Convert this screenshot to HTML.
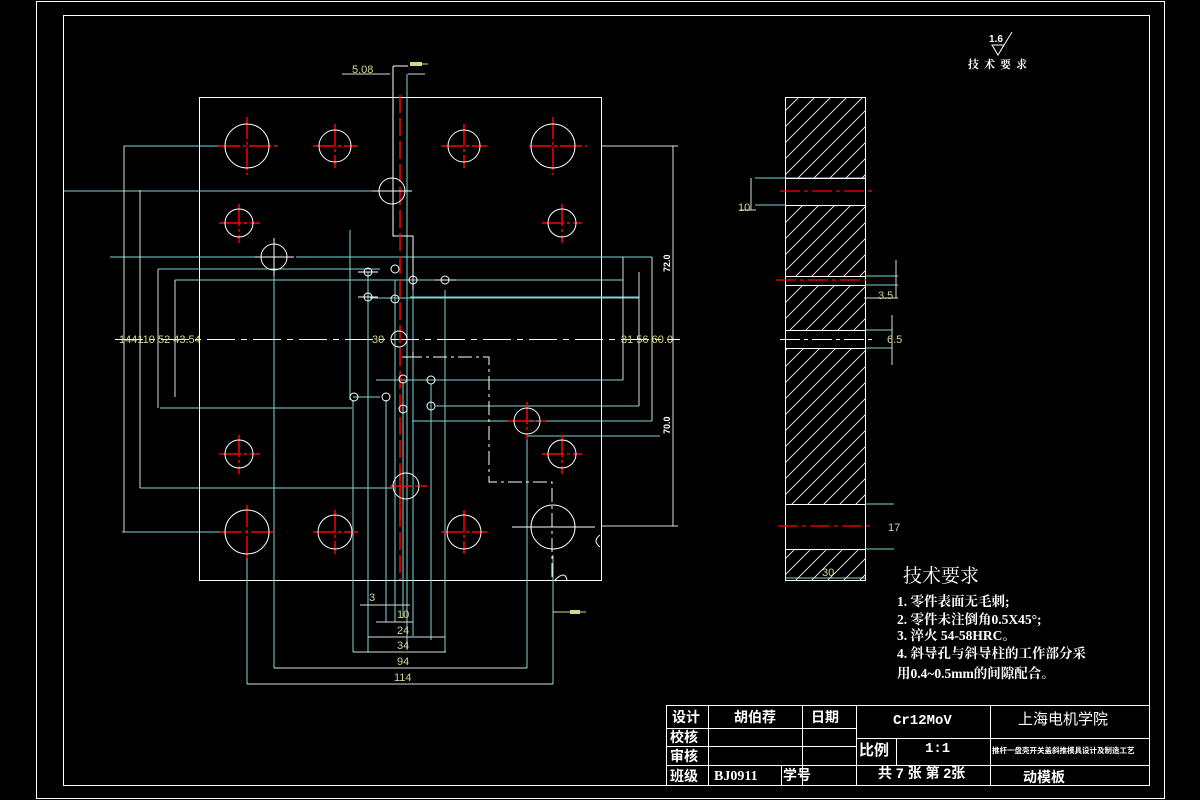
<!DOCTYPE html>
<html><head><meta charset="utf-8"><style>
html,body{margin:0;padding:0;background:#000;width:1200px;height:800px;overflow:hidden}
svg{display:block}
text{font-family:"Liberation Sans","Noto Sans CJK SC",sans-serif}
.y{fill:#d6d68a;font-size:11px}
.w{fill:#fff}
.cj{font-family:"Liberation Serif","Noto Serif CJK SC","Noto Sans CJK SC",serif;fill:#fff}
</style></head><body>
<svg width="1200" height="800" viewBox="0 0 1200 800" xmlns="http://www.w3.org/2000/svg">
<defs>
<pattern id="h" width="16" height="16" patternUnits="userSpaceOnUse">
<path d="M0,16 L16,0 M-4,4 L4,-4 M12,20 L20,12" stroke="#fff" stroke-width="0.8"/>
</pattern>
</defs>
<rect width="1200" height="800" fill="#000"/>
<rect x="36.5" y="1.5" width="1128" height="797" fill="none" stroke="#fff" stroke-width="1"/>
<rect x="63.5" y="15.5" width="1086" height="770" fill="none" stroke="#fff" stroke-width="1"/>

<rect x="199.5" y="97.5" width="402" height="483" fill="none" stroke="#fff"/>

<g stroke="#7fd6d6" stroke-width="1" fill="none">
<path d="M124,146H225 M140,488H392 M122,532H225 M64,191H380 M110,257H260 M296,257H652 M158,269H380 M175,280H623 M370,298H639 M410,297H639 M160,408H352 M353,397H380 M376,380H623 M436,380H623 M436,406H639 M412,421H652 M527,436H660"/>
<path d="M407,74V650 M274,270V668 M247,555V684 M368,272V652 M395,280V622 M413,290V636 M445,290V652 M353,400V652 M386,400V622 M403,382V618 M431,384V640 M527,436V668 M553,555V684 M350,230V400"/>
<path d="M755,178H866 M755,205H866 M866,276H898 M866,285H898 M866,330H892 M866,348H892 M866,504H894 M866,549H894 M786,578H866"/>
</g>

<g stroke="#ddd" stroke-width="1" fill="none">
<path d="M124,146V532 M140,190V488 M158,269V408 M175,280V397"/>
<path d="M602,146H678 M602,526H678 M673,146V526 M623,257V380 M639,272V406 M652,257V421"/>
<path d="M342,74H390 M408,74H425"/>
<path d="M360,605H410 M376,622H413 M368,637H445 M353,652H446 M274,668H527 M247,684H553"/>
<path d="M751,178V210 M740,210H756 M896,260V298 M864,298H898 M892,315V365"/>
</g>

<path d="M115,339.5H680" stroke="#fff" stroke-dasharray="28,6,6,6" fill="none"/>

<g stroke="#fff" fill="none">
<path d="M393,66V236H413V290"/>
<path d="M393,66H408"/>
<path d="M413,352V357H489V482H552V580" stroke-dasharray="14,4,3,4"/>
<path d="M402,357H413"/>
<path d="M555,580 q10,-10 12,0" />
<path d="M600,535 q-8,6 0,12"/>
</g>

<path d="M400,95V580" stroke="#f00" stroke-width="1.5" stroke-dasharray="18,5"/>
<g stroke="#f00" stroke-width="1.5" stroke-dasharray="22,3,3,3">
<path d="M218,146H277 M247,117V175 M529,146H587 M553,117V175"/>
<path d="M313,146H358 M335,124V168 M441,146H487 M464,124V168"/>
<path d="M219,223H260 M239,204V243 M542,223H582 M562,204V243"/>
<path d="M219,454H260 M239,435V474 M542,454H582 M562,435V474"/>
<path d="M220,532H275 M247,505V560 M313,532H358 M335,510V554 M441,532H487 M464,510V554"/>
<path d="M508,421H546 M527,402V440 M390,486H427 M400,470V520"/>
</g>

<g stroke="#fff" fill="none" stroke-width="1">
<circle cx="247" cy="146" r="22"/><circle cx="553" cy="146" r="22"/>
<circle cx="335" cy="146" r="16"/><circle cx="464" cy="146" r="16"/>
<circle cx="239" cy="223" r="14"/><circle cx="562" cy="223" r="14"/>
<circle cx="239" cy="454" r="14"/><circle cx="562" cy="454" r="14"/>
<circle cx="247" cy="532" r="22"/><circle cx="553" cy="527" r="22"/>
<circle cx="335" cy="532" r="17"/><circle cx="464" cy="532" r="17"/>
<circle cx="392" cy="191" r="13"/><circle cx="274" cy="257" r="13"/>
<circle cx="527" cy="421" r="13"/><circle cx="406" cy="486" r="13"/>
<circle cx="399" cy="339" r="8"/>
<circle cx="368" cy="272" r="4"/><circle cx="395" cy="269" r="4"/>
<circle cx="413" cy="280" r="4"/><circle cx="445" cy="280" r="4"/>
<circle cx="368" cy="297" r="4"/><circle cx="395" cy="299" r="4"/>
<circle cx="403" cy="379" r="4"/><circle cx="431" cy="380" r="4"/>
<circle cx="354" cy="397" r="4"/><circle cx="386" cy="397" r="4"/>
<circle cx="403" cy="409" r="4"/><circle cx="431" cy="406" r="4"/>
<path d="M255,257H294 M274,238V276 M372,191H412 M358,272H378 M358,297H378 M435,280H456 M512,527H595"/>
</g>

<text x="352" y="73" class="y">5.08</text>
<rect x="410" y="62" width="12" height="4" fill="#d6d68a"/><path d="M422,64H428" stroke="#d6d68a"/>
<text x="119" y="343" class="y">144110 52 43.54</text>
<text x="372" y="343" class="y">30</text>
<text x="621" y="343" class="y">31 56 60.0</text>
<text x="0" y="0" class="w" style="font-size:9px;font-weight:bold" transform="translate(670,272) rotate(-90)">72.0</text>
<text x="0" y="0" class="w" style="font-size:9px;font-weight:bold" transform="translate(670,434) rotate(-90)">70.0</text>
<text x="369" y="601" class="y">3</text>
<text x="397" y="618" class="y">10</text>
<text x="397" y="634" class="y">24</text>
<text x="397" y="649" class="y">34</text>
<text x="397" y="665" class="y">94</text>
<text x="394" y="681" class="y">114</text>
<rect x="570" y="610" width="10" height="4" fill="#d6d68a"/><path d="M553,612H586" stroke="#d6d68a"/>

<rect x="785" y="97" width="81" height="483" fill="url(#h)"/>
<g fill="#000">
<rect x="786" y="178" width="80" height="27"/>
<rect x="786" y="276" width="80" height="9"/>
<rect x="786" y="330" width="80" height="18"/>
<rect x="786" y="504" width="80" height="45"/>
</g>
<rect x="785.5" y="97.5" width="80" height="483" fill="none" stroke="#fff"/>
<g stroke="#fff"><path d="M786,178.5H866 M786,205.5H866 M786,276.5H866 M786,285.5H866 M786,330.5H866 M786,348.5H866 M786,504.5H866 M786,549.5H866"/></g>
<g stroke="#f00" stroke-width="1.2" stroke-dasharray="20,4,4,4"><path d="M780,191H872 M776,280H866 M778,526H872"/></g>
<path d="M780,339.5H874" stroke="#fff" stroke-dasharray="20,4,4,4"/>
<text x="738" y="211" class="y">10</text>
<text x="878" y="299" class="y">3.5</text>
<text x="887" y="343" class="y">6.5</text>
<text x="888" y="531" class="y">17</text>
<text x="822" y="576" class="y">30</text>

<text x="989" y="42" class="w" style="font-size:10px;font-weight:bold">1.6</text>
<path d="M992,45H1004L998,55Z M998,55L1012,32" stroke="#fff" fill="none"/>
<text x="968" y="68" class="cj" style="font-size:11px;letter-spacing:5px;font-weight:bold">技术要求</text>

<text x="903" y="582" class="cj" style="font-size:19px">技术要求</text>
<g class="cj" style="font-size:13.5px;font-weight:bold">
<text x="897" y="606" class="cj">1.  零件表面无毛刺;</text>
<text x="897" y="624" class="cj">2.  零件未注倒角0.5X45°;</text>
<text x="897" y="640" class="cj">3.  淬火 54-58HRC。</text>
<text x="897" y="658" class="cj">4.  斜导孔与斜导柱的工作部分采</text>
<text x="897" y="678" class="cj">用0.4~0.5mm的间隙配合。</text>
</g>

<g stroke="#fff" fill="none" stroke-width="1">
<rect x="666.5" y="705.5" width="483" height="80"/>
<path d="M708.5,705V785 M802.5,705V785 M856.5,705V785 M990.5,705V785 M896.5,738V765"/>
<path d="M666,728.5H856 M666,746.5H856 M666,765.5H856 M856,738.5H1150 M856,765.5H1150"/>
<path d="M781.5,765V785"/>
</g>
<g class="cj" style="font-size:14px;font-weight:bold">
<text x="672" y="722">设计</text>
<text x="734" y="722">胡伯荐</text>
<text x="811" y="722">日期</text>
<text x="670" y="742">校核</text>
<text x="670" y="761">审核</text>
<text x="670" y="781">班级</text>
<text x="714" y="780" style="font-family:'Liberation Serif',serif">BJ0911</text>
<text x="783" y="780">学号</text>
<text x="893" y="724" style="font-family:'Liberation Mono',monospace;font-size:14px">Cr12MoV</text>
<text x="1018" y="724" style="font-size:15px;font-weight:normal">上海电机学院</text>
<text x="859" y="755" style="font-size:15px">比例</text>
<text x="925" y="752" style="font-family:'Liberation Mono',monospace">1:1</text>
<text x="992" y="753" style="font-size:7.5px">推杆一盘壳开关盖斜推模具设计及制造工艺</text>
<text x="878" y="778">共 7 张 第 2张</text>
<text x="1023" y="782">动模板</text>
</g>
</svg>
</body></html>
